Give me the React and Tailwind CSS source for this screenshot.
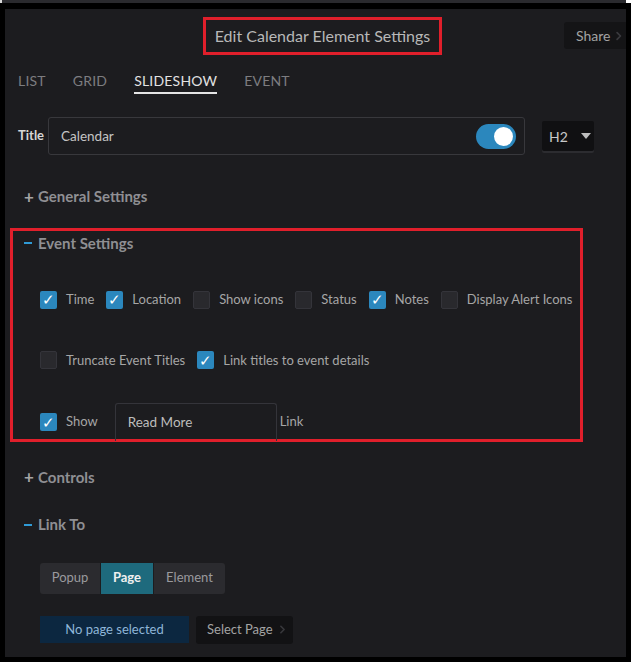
import React from "react";
import { ChevronRight } from "lucide-react";

const Check = ({ checked, label }) => (
  <label className="flex items-center gap-[9px]">
    <span
      className={
        checked
          ? "flex h-[18px] w-[17px] items-center justify-center rounded-[2px] bg-[#2b87bd] text-[15px] leading-none text-white"
          : "h-[18px] w-[17px] rounded-[2px] border border-[#34343a] bg-[#29292d]"
      }
    >
      {checked ? "✓" : null}
    </span>
    <span className="whitespace-nowrap text-[13px] text-[#a6a6a6]">{label}</span>
  </label>
);

const SectionHead = ({ open, children }) => (
  <div className="flex items-center gap-[6px] text-[15px] font-bold text-[#8f8f93]">
    {open ? (
      <span className="mt-[1px] h-[2px] w-[8px] bg-[#2f9ad6]" />
    ) : (
      <span className="w-[8px] text-[17px] font-bold leading-none text-[#a5a5a5]">+</span>
    )}
    {children}
  </div>
);

const App = () => {
  return (
    <div className="flex h-[662px] w-[631px] flex-col bg-black font-['Lato',sans-serif]">
      <div className="flex h-[3px]">
        <div className="w-[2px] bg-[#d8d8d8]" />
        <div className="flex-1 bg-[#2a2a2e]" />
        <div className="w-[5px] bg-white" />
      </div>
      <div className="ml-[5px] mr-[5px] mt-[6px] h-[648px] bg-[#1c1c1f]">
        {/* header */}
        <div className="relative flex h-[58px] items-start justify-center pl-[14px] pt-[8px]">
          <div className="flex h-[38px] w-[239px] items-center justify-center border-[3px] border-[#e01f2b] text-[16px] text-[#b8b8b8]">
            Edit Calendar Element Settings
          </div>
          <div className="absolute right-0 top-[13px] flex h-[27px] w-[62px] items-center gap-[2px] rounded-l-[3px] bg-[#141416] pl-[12px] text-[14px] text-[#a3a3a3]">
            Share
            <ChevronRight size={14} strokeWidth={3} className="text-[#3a3a3e]" />
          </div>
        </div>

        {/* tabs */}
        <div className="flex h-[36px] items-start gap-[27px] pl-[13px] pt-[3px] text-[14px] tracking-[0.2px]">
          <span className="text-[#7d7d80]">LIST</span>
          <span className="text-[#7d7d80]">GRID</span>
          <span className="border-b-[2px] border-[#e5e5e5] pb-[1px] text-[#e2e2e2]">SLIDESHOW</span>
          <span className="text-[#7d7d80]">EVENT</span>
        </div>

        {/* title row */}
        <div className="mt-[14px] flex items-center pl-[13px]">
          <span className="w-[30px] text-[13px] font-bold text-[#d6d6d6]">Title</span>
          <div className="flex h-[38px] w-[477px] items-center justify-between rounded-[3px] border border-[#38383c] bg-[#1c1c1f] pl-[12px] pr-[8px]">
            <span className="text-[13.5px] text-[#c4c4c4]">Calendar</span>
            <span className="flex h-[25px] w-[40px] items-center justify-end rounded-full bg-[#2b87bd] pr-[3px]">
              <span className="h-[19px] w-[19px] rounded-full bg-white" />
            </span>
          </div>
          <div className="ml-[17px] flex h-[30px] w-[52px] items-center gap-[13px] rounded-[2px] bg-[#101012] pl-[7px] text-[14px] text-[#c9c9c9] shadow-[0_2px_0_#2c2c30]">
            H2
            <span className="h-0 w-0 border-x-[5px] border-t-[6px] border-x-transparent border-t-[#bdbdbd]" />
          </div>
        </div>

        {/* general settings */}
        <div className="mt-[30px] pl-[19px]">
          <SectionHead>General Settings</SectionHead>
        </div>

        {/* event settings */}
        <div className="ml-[5px] mt-[20px] h-[214px] w-[573px] border-[3px] border-[#e01f2b] pl-[27px]">
          <div className="-ml-[16px] pt-[1px]">
            <SectionHead open>Event Settings</SectionHead>
          </div>
          <div className="mt-[36px] flex items-center gap-[12px]">
            <Check checked label="Time" />
            <Check checked label="Location" />
            <Check label="Show icons" />
            <Check label="Status" />
            <Check checked label="Notes" />
            <Check label="Display Alert Icons" />
          </div>
          <div className="mt-[41px] flex items-center gap-[12px]">
            <Check label="Truncate Event Titles" />
            <Check checked label="Link titles to event details" />
          </div>
          <div className="mt-[33px] flex items-center">
            <Check checked label="Show" />
            <div className="ml-[17px] flex h-[38px] w-[162px] items-center rounded-t-[3px] border border-b-0 border-[#34343a] pl-[12px] text-[13.5px] text-[#bcbcbc]">
              Read More
            </div>
            <span className="ml-[3px] text-[13px] text-[#a6a6a6]">Link</span>
          </div>
        </div>

        {/* controls */}
        <div className="mt-[24px] pl-[19px]">
          <SectionHead>Controls</SectionHead>
        </div>

        {/* link to */}
        <div className="mt-[25px] pl-[19px]">
          <SectionHead open>Link To</SectionHead>
        </div>
        <div className="ml-[35px] mt-[27px] flex h-[31px] w-[185px] overflow-hidden rounded-[3px] bg-[#2b2b2f] text-[13px]">
          <span className="flex w-[61px] items-center justify-center border-r border-[#1c1c1f] text-[#9a9a9e]">Popup</span>
          <span className="flex w-[52px] items-center justify-center bg-[#1e6a7d] font-bold text-[#f0f0f0]">Page</span>
          <span className="flex flex-1 items-center justify-center border-l border-[#1c1c1f] text-[#9a9a9e]">Element</span>
        </div>
        <div className="ml-[35px] mt-[22px] flex items-center gap-[7px]">
          <div className="flex h-[27px] w-[149px] items-center justify-center bg-[#0c2740] text-[13px] text-[#8fb6d8]">
            No page selected
          </div>
          <div className="flex h-[28px] w-[97px] items-center gap-[3px] whitespace-nowrap rounded-[3px] bg-[#121214] pl-[11px] text-[13px] text-[#a3a3a3]">
            Select Page
            <ChevronRight size={13} strokeWidth={3} className="text-[#38383c]" />
          </div>
        </div>
      </div>
    </div>
  );
};

export default App;
